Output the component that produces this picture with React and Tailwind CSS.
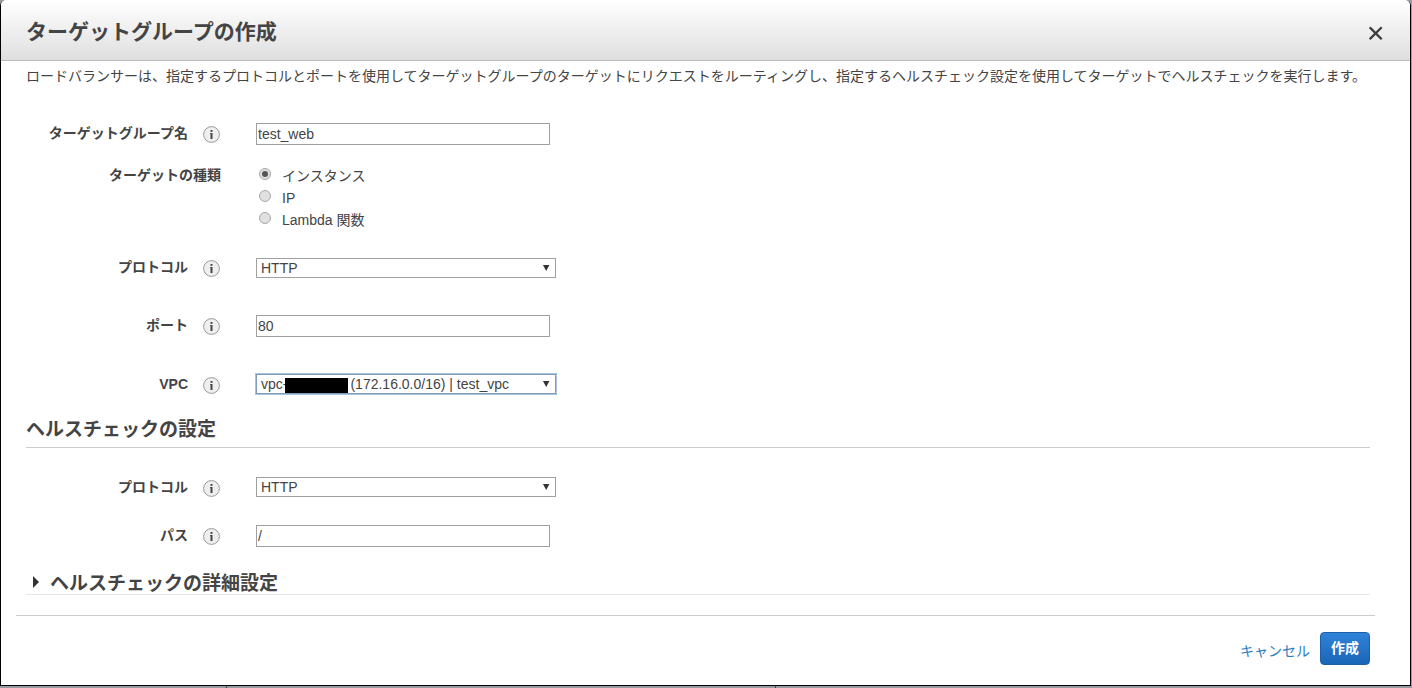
import { useState } from 'react';

const targetTypes = [
  { value: 'instance', label: 'インスタンス' },
  { value: 'ip', label: 'IP' },
  { value: 'lambda', label: 'Lambda 関数' },
];

const InfoIcon = () => (
  <svg width="17" height="17" viewBox="0 0 17 17" className="shrink-0">
    <circle cx="8.5" cy="8.5" r="7.9" fill="#efefef" stroke="#999" strokeWidth="1" />
    <rect x="7.5" y="4" width="2" height="1.8" fill="#444" />
    <path d="M7 7h2.5v6h-2V7.8H7z" fill="#444" />
  </svg>
);

const FormRow = ({ label, info = true, low = false, className, children }) => (
  <div className={`flex items-start ${className}`}>
    <div
      className={`flex h-[22px] shrink-0 items-center justify-end ${info ? 'w-[219px]' : 'w-[220px]'} ${
        low ? 'mt-px' : ''
      }`}
    >
      <span className="pb-[2px] font-bold">{label}</span>
      {info && (
        <span className="ml-[15px] pt-px">
          <InfoIcon />
        </span>
      )}
    </div>
    <div className={info ? 'ml-[36px]' : 'ml-[35px]'}>{children}</div>
  </div>
);

const TextInput = ({ value, onChange }) => (
  <input
    type="text"
    value={value}
    onChange={(e) => onChange(e.target.value)}
    className="block h-[22px] w-[294px] border border-[#a0a0a0] bg-white px-px text-[14px] outline-none"
  />
);

const SelectBox = ({ focused = false, children }) => (
  <button
    type="button"
    className={`mt-px flex h-[20px] w-[300px] items-center justify-between border bg-white pr-[5px] pl-[4px] text-left leading-[18px] ${
      focused ? 'border-[#7f9db9] ring-1 ring-[#a9c3e2]' : 'border-[#a0a0a0]'
    }`}
  >
    <span className="flex items-center whitespace-pre">{children}</span>
    <svg width="8" height="8" viewBox="0 0 8 8">
      <path d="M1 1h6.4L4.2 7z" fill="#333" />
    </svg>
  </button>
);

const Radio = ({ checked, onClick }) => (
  <button
    type="button"
    role="radio"
    aria-checked={checked}
    onClick={onClick}
    className="flex h-[12px] w-[12px] items-center justify-center rounded-full border border-[#a8a8a8] bg-[#e0e0e0]"
  >
    {checked && <span className="h-[6px] w-[6px] rounded-full bg-[#555]" />}
  </button>
);

const App = () => {
  const [name, setName] = useState('test_web');
  const [targetType, setTargetType] = useState('instance');
  const [port, setPort] = useState('80');
  const [path, setPath] = useState('/');

  return (
    <div className="flex h-[688px] w-[1412px] flex-col overflow-hidden bg-[#979c9e] font-['Liberation_Sans','Noto_Sans_CJK_JP',sans-serif] text-[14px] leading-[20px] text-[#444]">
      <div className="flex h-[686px] w-[1411px] flex-col rounded-t-[6px] border-x border-b border-black bg-white">
        {/* Header */}
        <div className="flex h-[61px] shrink-0 items-center justify-between rounded-t-[5px] border-b border-[#bcbcbc] bg-linear-to-b from-white to-[#dfdfdf] pr-[27px] pl-[25px]">
          <h1 className="pt-[4px] text-[21px] leading-[30px] font-bold">ターゲットグループの作成</h1>
          <button type="button" aria-label="閉じる" className="pt-[6px]">
            <svg width="14" height="14" viewBox="0 0 14 14">
              <path d="M.7 1.2l12 12M12.7 1.2l-12 12" stroke="#3c3c3c" strokeWidth="2.3" />
            </svg>
          </button>
        </div>

        <p className="mt-[5px] h-[20px] pl-[25px] whitespace-nowrap">
          ロードバランサーは、指定するプロトコルとポートを使用してターゲットグループのターゲットにリクエストをルーティングし、指定するヘルスチェック設定を使用してターゲットでヘルスチェックを実行します。
        </p>

        {/* Target group settings */}
        <FormRow label="ターゲットグループ名" className="mt-[37px]">
          <TextInput value={name} onChange={setName} />
        </FormRow>
        <FormRow label="ターゲットの種類" info={false} className="mt-[20px]">
          <div className="flex flex-col">
            {targetTypes.map((type) => (
              <div key={type.value} className="flex h-[22px] items-center pl-[3px]">
                <span className="pb-[4px]">
                  <Radio checked={targetType === type.value} onClick={() => setTargetType(type.value)} />
                </span>
                <span className="ml-[11px]">{type.label}</span>
              </div>
            ))}
          </div>
        </FormRow>
        <FormRow label="プロトコル" className="mt-[26px]">
          <SelectBox>HTTP</SelectBox>
        </FormRow>
        <FormRow label="ポート" className="mt-[36px]">
          <TextInput value={port} onChange={setPort} />
        </FormRow>
        <FormRow label="VPC" low className="mt-[36px]">
          <SelectBox focused>
            vpc-
            <span className="mt-[3px] mr-[2px] -ml-[2px] h-[15px] w-[63px] bg-black" />
            (172.16.0.0/16) | test_vpc
          </SelectBox>
        </FormRow>

        {/* Health check */}
        <h2 className="mt-[18px] mr-[40px] ml-[25px] h-[34px] border-b border-[#ccc] pt-[2px] text-[19px] leading-[28px] font-bold">
          ヘルスチェックの設定
        </h2>
        <FormRow label="プロトコル" low className="mt-[28px]">
          <SelectBox>HTTP</SelectBox>
        </FormRow>
        <FormRow label="パス" className="mt-[26px]">
          <TextInput value={path} onChange={setPath} />
        </FormRow>
        <div className="mt-[23px] mr-[40px] ml-[25px] flex h-[25px] items-center border-b border-[#e8e8e8] pl-[7px]">
          <svg width="6" height="12" viewBox="0 0 6 12">
            <path d="M0 0l6 6-6 6z" fill="#333" />
          </svg>
          <h2 className="ml-[11px] pt-[3px] text-[19px] leading-[28px] font-bold">ヘルスチェックの詳細設定</h2>
        </div>

        {/* Footer */}
        <div className="mt-[20px] mr-[35px] ml-[15px] flex items-start justify-end border-t border-[#ccc] pt-[16px] pr-[5px]">
          <button type="button" className="mt-[9px] mr-[10px] text-[#2d7cc0]">
            キャンセル
          </button>
          <button
            type="button"
            className="h-[33px] w-[50px] rounded-[4px] border border-[#1f5fa9] bg-linear-to-b from-[#2f83d8] to-[#1a65b8] pb-px font-bold text-white"
          >
            作成
          </button>
        </div>
      </div>

      {/* Edge of the page behind the dialog */}
      <div className="flex h-[2px]">
        <div className="w-[227px] border-r border-[#444]" />
        <div className="w-[549px] border-r border-[#444]" />
      </div>
    </div>
  );
};

export default App;
